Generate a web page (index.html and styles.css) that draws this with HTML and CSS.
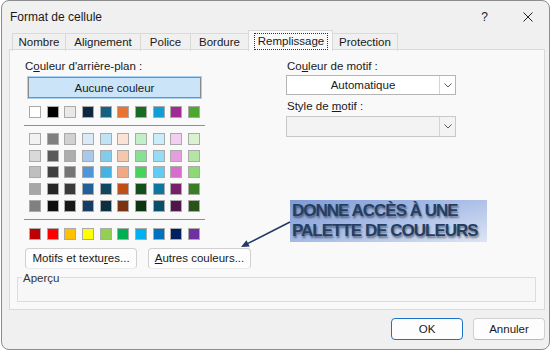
FILE: index.html
```html
<!DOCTYPE html>
<html lang="fr">
<head>
    <meta charset="UTF-8">
    <title>Format de cellule</title>
    <link rel="stylesheet" href="styles.css">
</head>
<body>
    <div class="dialog">
        <div class="titlebar">
            <span class="title">Format de cellule</span>
            <span class="help">?</span>
            <svg class="close" width="10" height="10" viewBox="0 0 10 10">
                <path d="M0.5 0.5 L9.5 9.5 M9.5 0.5 L0.5 9.5" stroke="#222" stroke-width="1" fill="none"/>
            </svg>
        </div>

        <div class="tabs">
            <div class="tab">Nombre</div>
            <div class="tab">Alignement</div>
            <div class="tab">Police</div>
            <div class="tab">Bordure</div>
            <div class="tab active"><span class="focus">Remplissage</span></div>
            <div class="tab">Protection</div>
        </div>

        <div class="panel">
            <div class="cols">
                <div class="bg-col">
                    <div class="label">C<u>o</u>uleur d'arrière-plan :</div>
                    <button class="no-color">Aucune couleur</button>
                    <div class="swatches" id="themeRow"></div>
                    <hr class="sep">
                    <div class="swatches grid" id="tintGrid"></div>
                    <hr class="sep">
                    <div class="swatches" id="standardRow"></div>
                </div>
                <div class="motif-col">
                    <div class="label">Co<u>u</u>leur de motif :</div>
                    <div class="select">
                        <span class="value">Automatique</span>
                        <span class="drop"><svg width="8" height="5" viewBox="0 0 8 5"><path d="M0.5 0.5 L4 4 L7.5 0.5" stroke="#555" fill="none"/></svg></span>
                    </div>
                    <div class="label second">Style de <u>m</u>otif :</div>
                    <div class="select disabled">
                        <span class="value"></span>
                        <span class="drop"><svg width="8" height="5" viewBox="0 0 8 5"><path d="M0.5 0.5 L4 4 L7.5 0.5" stroke="#555" fill="none"/></svg></span>
                    </div>
                </div>
            </div>

            <div class="more">
                <button class="btn motifs">Motifs et textu<u>r</u>es...</button>
                <button class="btn autres"><u>A</u>utres couleurs...</button>
            </div>

            <fieldset class="preview">
                <legend>Aperçu</legend>
            </fieldset>
        </div>

        <div class="footer">
            <button class="btn ok">OK</button>
            <button class="btn">Annuler</button>
        </div>

        <div class="callout">DONNE ACCÈS À UNE<br>PALETTE DE COULEURS</div>
        <svg class="arrow" width="56" height="34" viewBox="0 0 56 34">
            <line x1="52" y1="4" x2="10" y2="25.4" stroke="#1f3864" stroke-width="1.6"/>
            <polygon points="3,29 11.7,28.5 8.5,22.2" fill="#1f3864"/>
        </svg>
    </div>

    <script>
        // palette Office : couleurs du thème, nuances, couleurs standard
        const theme = ['#ffffff', '#000000', '#e8e8e8', '#0e2841', '#156082', '#e97132', '#196b24', '#0f9ed5', '#a02b93', '#4ea72e'];
        const tints = [
            ['#f2f2f2', '#7f7f7f', '#d1d1d1', '#dceaf7', '#c0e4f5', '#fbe2d5', '#c1f0c8', '#caedfb', '#f2cfee', '#daf2d0'],
            ['#d9d9d9', '#595959', '#adadad', '#a6c9ec', '#83cbeb', '#f7c7ac', '#84e291', '#95dcf7', '#e59edd', '#b4e5a2'],
            ['#bfbfbf', '#404040', '#757575', '#4e95d9', '#44b3e1', '#f1a983', '#47d359', '#61cbf3', '#d86dcd', '#8ed973'],
            ['#a6a6a6', '#262626', '#3a3a3a', '#215f9a', '#0f4761', '#c04f15', '#124f1a', '#0b76a0', '#782069', '#3b7d23'],
            ['#808080', '#0d0d0d', '#171717', '#153d64', '#0a2f41', '#7a3210', '#0c3511', '#074f6a', '#501549', '#275317']
        ];
        const standard = ['#c00000', '#ff0000', '#ffc000', '#ffff00', '#92d050', '#00b050', '#00b0f0', '#0070c0', '#002060', '#7030a0'];

        function fill(id, colors) {
            const box = document.getElementById(id);
            colors.forEach(c => {
                const s = document.createElement('span');
                s.className = 'swatch';
                s.style.background = c;
                box.appendChild(s);
            });
        }

        fill('themeRow', theme);
        fill('tintGrid', tints.flat());
        fill('standardRow', standard);
    </script>
</body>
</html>
```

FILE: styles.css
```css
body {
    margin: 0;
    background: #ffffff;
    font-family: "Liberation Sans", Arial, sans-serif;
    font-size: 11.5px;
    color: #1a1a1a;
}
.dialog {
    position: relative;
    box-sizing: border-box;
    width: 549px;
    height: 350px;
    margin-left: 1px;
    background: #f0f0f0;
    border: 1px solid #8c8c8c;
    border-radius: 8px;
    display: flex;
    flex-direction: column;
}
.titlebar {
    height: 29px;
    display: flex;
    align-items: center;
    padding: 3px 0 0 8px;
    box-sizing: border-box;
}
.title {
    flex: 1;
    font-size: 12px;
}
.help {
    font-size: 12px;
    margin-right: 35px;
}
.close {
    margin-right: 16px;
}
.tabs {
    display: grid;
    grid-template-columns: 54px 75px 50px 58px 84px 65px;
    align-items: end;
    height: 20px;
    margin-left: 10px;
    margin-bottom: -1px;
    position: relative;
    z-index: 1;
}
.tab {
    box-sizing: border-box;
    height: 18px;
    line-height: 17px;
    text-align: center;
    border: 1px solid #d9d9d9;
    border-left: none;
    border-bottom: none;
}
.tab:first-child {
    border-left: 1px solid #d9d9d9;
}
.tab.active {
    height: 21px;
    background: #f9f9f9;
    border-left: 1px solid #d9d9d9;
    margin-left: -1px;
    padding: 2px 4px 2px 5px;
}
.focus {
    display: block;
    height: 15px;
    line-height: 14px;
    border: 1px dotted #333;
}
.panel {
    box-sizing: border-box;
    height: 261px;
    margin: 0 4px 0 7px;
    background: #f9f9f9;
    border: 1px solid #dadada;
    padding: 8px 0 0 14px;
}
.cols {
    display: flex;
    gap: 81px;
}
.bg-col {
    width: 181px;
}
.label {
    line-height: 16px;
    margin-left: 1px;
}
.no-color {
    display: block;
    box-sizing: border-box;
    width: 173px;
    height: 21px;
    margin: 3px 0 0 4px;
    background: #cce4f7;
    border: 1px solid #8a8a8a;
    box-shadow: 0 0 0 1px #a8d2f3;
    font: inherit;
    color: inherit;
    padding: 0;
}
.swatches {
    display: grid;
    grid-template-columns: repeat(10, 12px);
    column-gap: 5.67px;
    padding-left: 5px;
    margin-top: 8px;
}
.swatches.grid {
    row-gap: 4.67px;
    margin-top: 7px;
}
.swatch {
    box-sizing: border-box;
    width: 12px;
    height: 12px;
    border: 1px solid #aaaaaa;
}
.sep {
    border: none;
    border-top: 1px solid #8f8f8f;
    margin: 7px 0 0 0;
}
.motif-col {
    width: 170px;
}
.label.second {
    margin-top: 3px;
}
.select {
    box-sizing: border-box;
    display: flex;
    height: 20px;
    margin-top: 1px;
    background: #ffffff;
    border: 1px solid #b4b4b4;
}
.select.disabled {
    height: 21px;
    margin-top: 2px;
    background: #f3f3f3;
    border-color: #c8c8c8;
}
.value {
    flex: 1;
    text-align: center;
    line-height: 18px;
}
.drop {
    width: 15px;
    border-left: 1px solid #d4d4d4;
    display: flex;
    align-items: center;
    justify-content: center;
}
.more {
    display: flex;
    gap: 11px;
    margin: 8px 0 0 1px;
}
.btn {
    box-sizing: border-box;
    height: 21px;
    background: #fdfdfd;
    border: 1px solid #d0d0d0;
    border-bottom-color: #ececec;
    border-radius: 4px;
    font: inherit;
    color: inherit;
    padding: 0;
}
.motifs {
    width: 112px;
}
.autres {
    width: 103px;
}
.preview {
    box-sizing: border-box;
    height: 31px;
    margin: 2px 8px 0 -7px;
    padding: 0 0 0 4px;
    border: 1px solid #dcdcdc;
    background: #f7f7f7;
}
.preview legend {
    padding: 0 1px;
    line-height: 14px;
    color: #333;
}
.footer {
    display: flex;
    justify-content: flex-end;
    gap: 10px;
    padding: 8px 4px 0 0;
}
.footer .btn {
    width: 72px;
    height: 22px;
    border-bottom-color: #b8b8b8;
}
.footer .ok {
    border: 1px solid #1a73c8;
}
.callout {
    position: absolute;
    left: 288px;
    top: 199px;
    width: 197px;
    height: 42px;
    box-sizing: border-box;
    padding: 1px 0 0 2px;
    background: linear-gradient(165deg, #7f9ad5 0%, #a9bde6 50%, #dce5f5 100%);
    font-family: "Liberation Sans", Arial, sans-serif;
    font-weight: bold;
    font-size: 17px;
    line-height: 20px;
    letter-spacing: -1px;
    color: #243f66;
    text-shadow: 1px 2px 2px rgba(0, 0, 0, 0.45);
    white-space: nowrap;
}
.arrow {
    position: absolute;
    left: 236px;
    top: 217px;
}
```
